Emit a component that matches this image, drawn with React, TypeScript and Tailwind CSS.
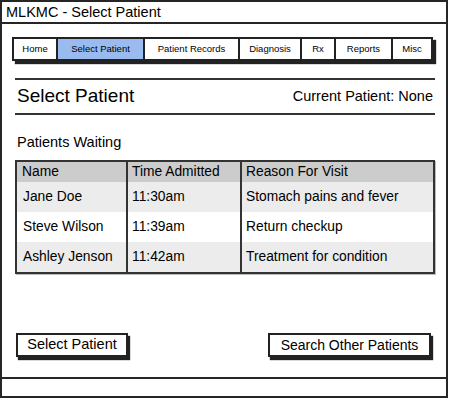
export default function App() {
  const tabs = [
    { label: 'Home', w: 'w-[46px]' },
    { label: 'Select Patient', w: 'w-[87px]', active: true },
    { label: 'Patient Records', w: 'w-[95px]' },
    { label: 'Diagnosis', w: 'w-[62px]' },
    { label: 'Rx', w: 'w-[34px]' },
    { label: 'Reports', w: 'w-[57px]' },
    { label: 'Misc', w: 'w-[40px]' },
  ]

  const patients = [
    { name: 'Jane Doe', time: '11:30am', reason: 'Stomach pains and fever', bg: 'bg-[#ececec]' },
    { name: 'Steve Wilson', time: '11:39am', reason: 'Return checkup', bg: 'bg-white' },
    { name: 'Ashley Jenson', time: '11:42am', reason: 'Treatment for condition', bg: 'bg-[#ececec]' },
  ]

  return (
    <div className="w-[450px] h-[400px] bg-white text-black font-['Liberation_Sans',Arial,sans-serif]">
      <div className="w-[448px] h-[398px] flex flex-col">
        {/* title bar */}
        <div className="h-[24px] border-2 border-[#262626] flex items-center pl-[4px] text-[14.5px] leading-none">
          MLKMC - Select Patient
        </div>

        {/* window body */}
        <div className="flex-1 border-x-2 border-[#262626] flex flex-col">
          <div className="ml-[10px] mt-[13px] flex h-[24px] w-[421px] shadow-[3px_3px_1px_#222]">
            {tabs.map((t, i) => (
              <div
                key={t.label}
                className={`${t.w} h-full border-y-2 border-r-2 border-[#222] flex items-center justify-center text-[9.5px] ${i === 0 ? 'border-l-2' : ''} ${t.active ? 'bg-[#99bbef]' : 'bg-white'}`}
              >
                {t.label}
              </div>
            ))}
          </div>

          <div className="ml-[13px] mt-[17px] w-[420px] h-[2px] bg-[#333]" />
          <div className="ml-[15px] w-[416px] h-[33px] flex items-center justify-between">
            <span className="text-[19px]">Select Patient</span>
            <span className="text-[14.5px]">Current Patient: None</span>
          </div>
          <div className="ml-[13px] w-[420px] h-[2px] bg-[#333]" />

          <div className="ml-[15px] mt-[18px] h-[20px] flex items-center text-[14.5px]">Patients Waiting</div>

          {/* table */}
          <div className="ml-[13px] mt-[7px] w-[420px] border-2 border-[#333] text-[13.8px] shadow-[1px_1px_0_#bbb]">
            <div className="flex h-[20px] bg-[#cccccc]">
              <div className="w-[111px] border-r-2 border-[#333] pl-[5px] flex items-center">Name</div>
              <div className="w-[114px] border-r-2 border-[#333] pl-[4px] flex items-center">Time Admitted</div>
              <div className="flex-1 pl-[4px] flex items-center">Reason For Visit</div>
            </div>
            {patients.map((p) => (
              <div key={p.name} className={`flex h-[30px] ${p.bg}`}>
                <div className="w-[111px] border-r-2 border-[#333] pl-[6px] flex items-center">{p.name}</div>
                <div className="w-[114px] border-r-2 border-[#333] pl-[4px] flex items-center">{p.time}</div>
                <div className="flex-1 pl-[4px] flex items-center">{p.reason}</div>
              </div>
            ))}
          </div>

          <div className="mt-[59px] pl-[14px] pr-[15px] flex justify-between">
            <button className="w-[112px] h-[24px] border-2 border-[#222] bg-white flex items-center justify-center text-[14.5px] shadow-[2px_3px_1px_#222]">
              Select Patient
            </button>
            <button className="w-[163px] h-[24px] border-2 border-[#222] bg-white flex items-center justify-center text-[14px] shadow-[2px_3px_1px_#222]">
              Search Other Patients
            </button>
          </div>
        </div>

        {/* status bar */}
        <div className="h-[21px] border-2 border-[#262626]" />
      </div>
    </div>
  )
}
